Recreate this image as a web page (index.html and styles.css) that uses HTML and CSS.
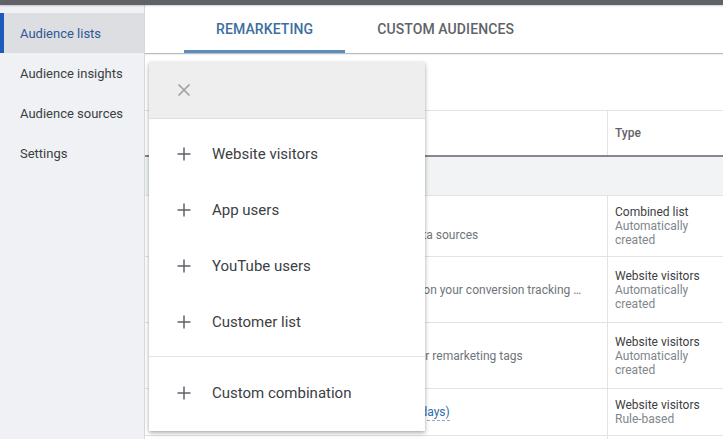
FILE: index.html
```html
<!DOCTYPE html>
<html lang="en">
<head>
<meta charset="utf-8">
<title>Audience manager</title>
<link rel="stylesheet" href="styles.css">
</head>
<body>
<div class="topbar"></div>
<div class="app">
  <nav class="sidebar">
    <a class="nav-item active">Audience lists</a>
    <a class="nav-item">Audience insights</a>
    <a class="nav-item">Audience sources</a>
    <a class="nav-item">Settings</a>
  </nav>
  <main class="main">
    <div class="tabs">
      <div class="tab active">REMARKETING</div>
      <div class="tab">CUSTOM AUDIENCES</div>
    </div>
    <div class="toolbar"></div>
    <div class="table">
      <div class="row head">
        <div class="cell name"><span class="col-title">Audience</span></div>
        <div class="cell type"><span class="col-title">Type</span></div>
      </div>
      <div class="row group">
        <div class="cell name"></div>
        <div class="cell type"></div>
      </div>
      <div class="row">
        <div class="cell name">
          <span class="aud-name">Combined list of all users</span>
          <span class="desc">Combination of people from all of your data sources</span>
        </div>
        <div class="cell type">
          <span class="type-main">Combined list</span>
          <span class="type-sub">Automatically created</span>
        </div>
      </div>
      <div class="row">
        <div class="cell name">
          <span class="aud-name">All converters</span>
          <span class="desc">All people who have previously converted on your conversion tracking tags and events</span>
          <span class="desc">Source: Google Ads</span>
        </div>
        <div class="cell type">
          <span class="type-main">Website visitors</span>
          <span class="type-sub">Automatically created</span>
        </div>
      </div>
      <div class="row">
        <div class="cell name">
          <span class="aud-name">All visitors (Google Ads)</span>
          <span class="desc">People who visited pages that contain your remarketing tags</span>
          <span class="desc">Source: Google Ads</span>
        </div>
        <div class="cell type">
          <span class="type-main">Website visitors</span>
          <span class="type-sub">Automatically created</span>
        </div>
      </div>
      <div class="row">
        <div class="cell name">
          <a class="aud-link">Visitors of pages with remarketing tag (7 days)</a>
        </div>
        <div class="cell type">
          <span class="type-main">Website visitors</span>
          <span class="type-sub">Rule-based</span>
        </div>
      </div>
      <div class="row">
        <div class="cell name">
          <a class="aud-link">Visitors of product pages (30 days)</a>
        </div>
        <div class="cell type">
          <span class="type-main">Website visitors</span>
          <span class="type-sub">Rule-based</span>
        </div>
      </div>
    </div>

    <div class="menu">
      <div class="menu-head">
        <svg class="icon-close" width="14" height="14" viewBox="0 0 14 14"><path d="M1.5 1.5 12.5 12.5M12.5 1.5 1.5 12.5" stroke="#9e9e9e" stroke-width="1.6" fill="none"/></svg>
      </div>
      <div class="menu-group">
        <div class="menu-item"><svg class="icon-plus" width="14" height="14" viewBox="0 0 14 14"><path d="M7 0.5V13.5M0.5 7H13.5" stroke="#5f6368" stroke-width="1.5" fill="none"/></svg><span>Website visitors</span></div>
        <div class="menu-item"><svg class="icon-plus" width="14" height="14" viewBox="0 0 14 14"><path d="M7 0.5V13.5M0.5 7H13.5" stroke="#5f6368" stroke-width="1.5" fill="none"/></svg><span>App users</span></div>
        <div class="menu-item"><svg class="icon-plus" width="14" height="14" viewBox="0 0 14 14"><path d="M7 0.5V13.5M0.5 7H13.5" stroke="#5f6368" stroke-width="1.5" fill="none"/></svg><span>YouTube users</span></div>
        <div class="menu-item"><svg class="icon-plus" width="14" height="14" viewBox="0 0 14 14"><path d="M7 0.5V13.5M0.5 7H13.5" stroke="#5f6368" stroke-width="1.5" fill="none"/></svg><span>Customer list</span></div>
      </div>
      <div class="menu-group last">
        <div class="menu-item"><svg class="icon-plus" width="14" height="14" viewBox="0 0 14 14"><path d="M7 0.5V13.5M0.5 7H13.5" stroke="#5f6368" stroke-width="1.5" fill="none"/></svg><span>Custom combination</span></div>
      </div>
    </div>
  </main>
</div>
</body>
</html>
```

FILE: styles.css
```css
* { box-sizing: border-box; }

html, body {
  margin: 0;
  padding: 0;
  height: 100%;
  overflow: hidden;
  background: #ffffff;
  font-family: Roboto, "Noto Sans", "Liberation Sans", sans-serif;
  color: #3c4043;
}

.topbar {
  height: 5px;
  background: #5f6368;
  box-shadow: 0 1px 2px rgba(0, 0, 0, 0.18);
  position: relative;
  z-index: 2;
}

.app {
  display: flex;
  height: calc(100vh - 5px);
}

.sidebar {
  width: 145px;
  flex: none;
  background: #eff1f4;
  border-right: 1px solid #d6d9dd;
  padding-top: 8px;
  display: flex;
  flex-direction: column;
}

.nav-item {
  height: 40px;
  display: flex;
  align-items: center;
  padding-left: 20px;
  font-size: 13px;
  color: #3c4043;
}

.nav-item.active {
  background: #dcdee2;
  color: #2f5796;
  box-shadow: inset 4px 0 0 #1b5cba;
}

.main {
  flex: 1;
  position: relative;
  min-width: 0;
}

.tabs {
  height: 49px;
  display: flex;
  padding-left: 39px;
  border-bottom: 1px solid #b9bbbe;
  box-shadow: 0 1px 1px rgba(0, 0, 0, 0.06);
}

.tab {
  position: relative;
  padding: 0 32px;
  display: flex;
  align-items: center;
  font-size: 14px;
  font-weight: 500;
  letter-spacing: 0.1px;
  color: #5f6368;
}

.tab.active {
  color: #3d6e9e;
}

.tab.active::after {
  content: "";
  position: absolute;
  left: 0;
  right: 0;
  bottom: 0;
  height: 3px;
  background: #5a8dc0;
}

.toolbar {
  height: 56px;
}

.table {
  border-top: 1px solid #e3e3e3;
}

.row {
  display: grid;
  grid-template-columns: 462px 1fr;
  border-bottom: 1px solid #e3e3e3;
}

.cell {
  display: flex;
  flex-direction: column;
  justify-content: center;
  min-width: 0;
}

.cell.name {
  padding: 9px 24px 8px 56px;
  overflow: hidden;
}

.cell.type {
  border-left: 1px solid #e3e3e3;
  padding: 9px 8px 9px 7px;
}

.row.head {
  height: 46px;
  border-bottom: 2px solid #85898e;
}

.row.head .cell {
  padding-top: 0;
  padding-bottom: 0;
}

.col-title {
  font-size: 12px;
  font-weight: 500;
  color: #5f6368;
}

.row.group {
  height: 39px;
  background: #f1f3f4;
}

.row.group .cell.type {
  border-left: none;
}

.aud-name {
  font-size: 13px;
  line-height: 16px;
  color: #3c4043;
  white-space: nowrap;
}

.desc {
  font-size: 12px;
  line-height: 16px;
  color: #70757a;
  white-space: nowrap;
  overflow: hidden;
  text-overflow: ellipsis;
}

.aud-link {
  align-self: flex-start;
  font-size: 12px;
  line-height: 15px;
  color: #2f6cab;
  border-bottom: 1px dashed #8aa9cc;
  white-space: nowrap;
}

.type-main,
.type-sub {
  font-size: 12px;
  line-height: 14px;
  max-width: 96px;
}

.type-main {
  color: #3c4043;
  white-space: nowrap;
}

.type-sub {
  color: #80868b;
}

/* Popup menu */
.menu {
  position: absolute;
  top: 57px;
  left: 4px;
  width: 276px;
  background: #ffffff;
  box-shadow: 0 1px 3px rgba(0, 0, 0, 0.25), 0 3px 6px rgba(0, 0, 0, 0.15);
  z-index: 5;
}

.menu-head {
  height: 57px;
  background: #eeeeee;
  border-bottom: 1px solid #dedede;
  display: flex;
  align-items: center;
  padding-left: 28px;
}

.menu-group {
  padding: 7px 0 6px;
  border-bottom: 1px solid #e3e3e3;
}

.menu-group.last {
  padding: 8px 0 10px;
  border-bottom: none;
}

.menu-item {
  height: 56px;
  display: flex;
  align-items: center;
  padding-left: 28px;
  gap: 21px;
  font-size: 15px;
  color: #3c4043;
}

.icon-plus,
.icon-close {
  flex: none;
  display: block;
}
```
